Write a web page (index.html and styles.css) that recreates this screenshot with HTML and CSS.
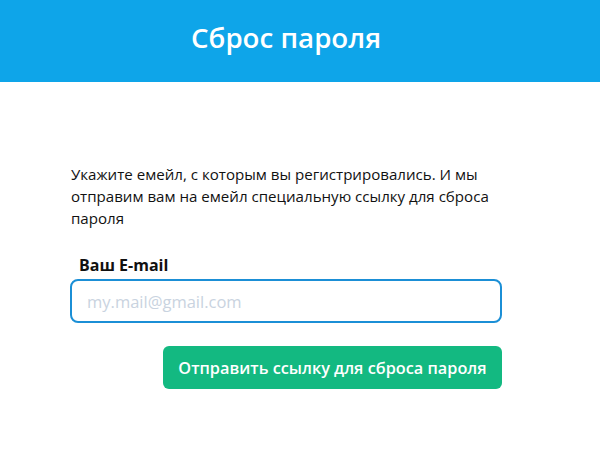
FILE: index.html
```html
<!DOCTYPE html>
<html lang="ru">
<head>
    <meta charset="UTF-8">
    <title>Сброс пароля</title>
    <link rel="stylesheet" href="styles.css">
</head>
<body>
    <div class="topbar">
        <h1 class="title">Сброс пароля</h1>
    </div>
    <div class="reset">
        <p class="hint">Укажите емейл, с которым вы регистрировались. И мы отправим вам на емейл специальную ссылку для сброса пароля</p>
        <form class="resetForm" action="#">
            <label class="label" for="email">Ваш E-mail</label>
            <input type="email" id="email" class="field" placeholder="my.mail@gmail.com" autofocus>
            <div class="actions">
                <input type="submit" value="Отправить ссылку для сброса пароля" class="button">
            </div>
        </form>
    </div>
</body>
</html>
```

FILE: styles.css
```css
body {
    margin: 0;
    background-color: #ffffff;
    color: #111111;
    font-family: "Open Sans", "Noto Sans", sans-serif;
}
.topbar {
    background-color: #0ea5e9;
    height: 82px;
    padding-right: 28px;
    display: flex;
    align-items: center;
    justify-content: center;
}
.title {
    margin: 0 0 8px 0;
    color: #ffffff;
    font-size: 27.7px;
    font-weight: 600;
}
.reset {
    width: 432px;
    margin: 0 0 0 70px;
    padding-top: 81px;
}
.hint {
    margin: 0 0 0 1px;
    font-size: 15.1px;
    line-height: 22px;
}
.resetForm {
    display: flex;
    flex-direction: column;
    margin-top: 25px;
}
.label {
    font-size: 16px;
    line-height: 22px;
    font-weight: 700;
    margin: 0 0 3px 9px;
}
.field {
    box-sizing: border-box;
    height: 44px;
    width: 100%;
    border: 2px solid #1b8fd6;
    border-radius: 8px;
    padding: 0 15px;
    font-family: inherit;
    font-size: 16.5px;
    color: #111111;
    outline: none;
}
.field::placeholder {
    color: #c9d3e0;
}
.actions {
    display: flex;
    justify-content: flex-end;
    margin-top: 23px;
}
.button {
    box-sizing: border-box;
    width: 339px;
    height: 43px;
    background-color: #13b981;
    border: none;
    border-radius: 6px;
    color: #ffffff;
    font-family: inherit;
    font-size: 16.3px;
    font-weight: 600;
}
```
